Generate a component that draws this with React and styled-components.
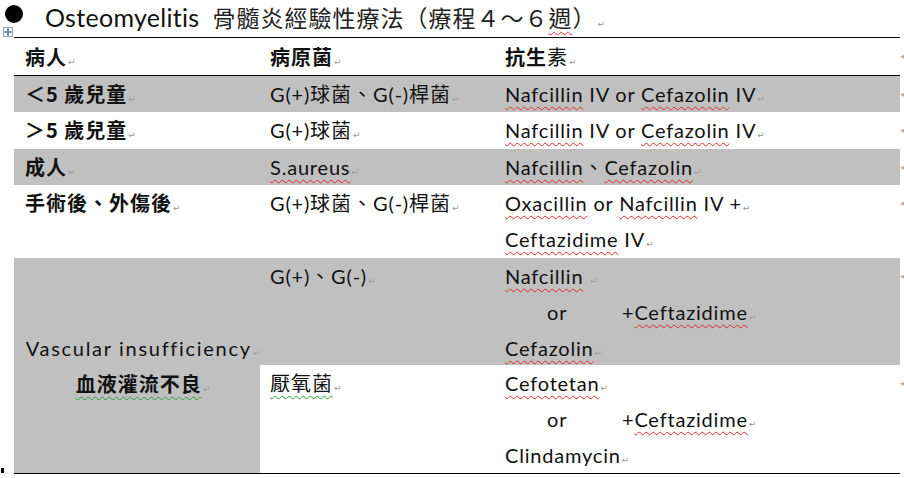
import React from "react";
import styled, { createGlobalStyle } from "styled-components";

const GlobalStyle = createGlobalStyle`
  html, body {
    margin: 0;
    padding: 0;
    background: #fff;
  }
  body {
    font-family: Lato, "Noto Sans CJK TC", sans-serif;
    color: #000;
  }
`;

const Page = styled.div`
  width: 904px;
  height: 478px;
  overflow: hidden;
`;

const TitleLine = styled.div`
  height: 37px;
  display: flex;
  align-items: flex-start;
  padding-left: 5px;
  box-sizing: border-box;
`;

const Bullet = styled.span`
  flex: none;
  width: 18px;
  height: 18px;
  margin-top: 5px;
  margin-right: 22px;
  border-radius: 50%;
  background: #000;
`;

const TitleText = styled.div`
  font-size: 25px;
  letter-spacing: 0.3px;
  line-height: 34px;
  white-space: nowrap;
  color: #111;
`;

const TitleCjk = styled.span`
  font-family: "Noto Sans CJK TC", sans-serif;
  font-size: 23px;
  letter-spacing: 1px;
  margin-left: 13px;
  color: #222;
`;

const Body = styled.div`
  display: flex;
  padding-left: 14px;
  position: relative;
`;

const MoveHandle = styled.div`
  position: absolute;
  left: 3px;
  top: -10px;
  width: 10px;
  height: 10px;
  display: flex;
`;

const CornerDot = styled.span`
  position: absolute;
  left: 1px;
  bottom: 1px;
  width: 3px;
  height: 5px;
  background: #000;
`;

const Table = styled.div`
  display: grid;
  grid-template-columns: 246px 234px 406px;
  grid-template-rows: 38px 36px 37px 36px 73px 107px 108px;
  border-top: 1px solid #000;
  border-bottom: 1px solid #000;
`;

const Cell = styled.div`
  box-sizing: border-box;
  background: ${(p) => (p.$shade ? "#c0c0c0" : "#fff")};
  padding: 0 10px 0 ${(p) => p.$pad || 10}px;
  font-size: 20px;
  letter-spacing: 0.8px;
  line-height: ${(p) => (p.$head ? "37px" : "36px")};
  white-space: nowrap;
  color: #111;
  border-bottom: ${(p) => (p.$head ? "1px solid #000" : "none")};
`;

const MergedCell = styled(Cell)`
  grid-row: span 2;
  display: flex;
  flex-direction: column;
  justify-content: center;
  align-items: center;
  padding: 0 0 0 12px;
`;

const WideLatin = styled.span`
  letter-spacing: 1.7px;
`;

const Zh = styled.span`
  font-family: "Noto Sans CJK TC", sans-serif;
  font-size: 20px;
  letter-spacing: 1px;
  font-weight: ${(p) => (p.$bold ? 700 : 400)};
`;

const Sq = styled.span`
  text-decoration: underline wavy ${(p) => (p.$green ? "#2ca02c" : "#e02828")};
  text-decoration-thickness: 1px;
  text-underline-offset: 4px;
  text-decoration-skip-ink: none;
`;

const Pm = styled.span`
  font-family: "DejaVu Sans", sans-serif;
  font-size: 9px;
  letter-spacing: 0;
  color: #9a9a9a;
  margin-left: 1px;
`;

const Line = styled.div`
  height: 36px;
  line-height: 36px;
`;

const OrLine = styled(Line)`
  display: flex;
`;

const OrWord = styled.span`
  display: inline-block;
  width: 75px;
  margin-left: 42px;
`;

const EndMarks = styled.div`
  width: 4px;
  overflow: hidden;
  padding-top: 1px;
  display: flex;
  flex-direction: column;
`;

const EndMark = styled.div`
  height: ${(p) => p.$h}px;
  line-height: ${(p) => (p.$h === 38 ? 37 : 36)}px;
  font-family: "DejaVu Sans", sans-serif;
  font-size: 9px;
  color: #b0b0b0;
  flex: none;
`;

const rowHeights = [38, 36, 37, 36, 73, 107, 108];

const MoveIcon = () => (
  <svg width="10" height="10" viewBox="0 0 10 10">
    <rect x="0.5" y="0.5" width="9" height="9" fill="#fff" stroke="#8fa3bf" />
    <path d="M5 1.5v7M1.5 5h7" stroke="#2f4f80" strokeWidth="1" />
    <path d="M5 1.5l-1.2 1.3h2.4zM5 8.5l-1.2-1.3h2.4zM1.5 5l1.3-1.2v2.4zM8.5 5l-1.3-1.2v2.4z" fill="#2f4f80" />
  </svg>
);

const Mark = () => <Pm>↵</Pm>;

export default function App() {
  return (
    <Page>
      <GlobalStyle />
      <TitleLine>
        <Bullet />
        <TitleText>
          Osteomyelitis
          <TitleCjk>
            骨髓炎經驗性療法（療程４～６<Sq>週</Sq>）<Pm>↵</Pm>
          </TitleCjk>
        </TitleText>
      </TitleLine>

      <Body>
        <MoveHandle>
          <MoveIcon />
        </MoveHandle>
        <CornerDot />
        <Table>
          <Cell $head $pad={11}>
            <Zh $bold>病人</Zh>
            <Mark />
          </Cell>
          <Cell $head>
            <Zh $bold>病原菌</Zh>
            <Mark />
          </Cell>
          <Cell $head $pad={11}>
            <Zh $bold>抗生</Zh>
            <Zh>素</Zh>
            <Mark />
          </Cell>

          <Cell $shade $pad={11}>
            <Zh $bold>＜5 歲兒童</Zh>
            <Mark />
          </Cell>
          <Cell $shade>
            G(+)<Zh>球菌、</Zh>G(-)<Zh>桿菌</Zh>
            <Mark />
          </Cell>
          <Cell $shade $pad={11}>
            <Sq>Nafcillin</Sq> IV or <Sq>Cefazolin</Sq> IV
            <Mark />
          </Cell>

          <Cell $pad={11}>
            <Zh $bold>＞5 歲兒童</Zh>
            <Mark />
          </Cell>
          <Cell>
            G(+)<Zh>球菌</Zh>
            <Mark />
          </Cell>
          <Cell $pad={11}>
            <Sq>Nafcillin</Sq> IV or <Sq>Cefazolin</Sq> IV
            <Mark />
          </Cell>

          <Cell $shade $pad={11}>
            <Zh $bold>成人</Zh>
            <Mark />
          </Cell>
          <Cell $shade>
            <Sq>S.aureus</Sq>
            <Mark />
          </Cell>
          <Cell $shade $pad={11}>
            <Sq>Nafcillin</Sq>
            <Zh>、</Zh>
            <Sq>Cefazolin</Sq>
            <Mark />
          </Cell>

          <Cell $pad={11}>
            <Zh $bold>手術後、外傷後</Zh>
            <Mark />
          </Cell>
          <Cell>
            G(+)<Zh>球菌、</Zh>G(-)<Zh>桿菌</Zh>
            <Mark />
          </Cell>
          <Cell $pad={11}>
            <Line>
              <Sq>Oxacillin</Sq> or <Sq>Nafcillin</Sq> IV +<Mark />
            </Line>
            <Line>
              <Sq>Ceftazidime</Sq> IV<Mark />
            </Line>
          </Cell>

          <MergedCell $shade>
            <Line>
              <WideLatin>Vascular insufficiency</WideLatin>
              <Mark />
            </Line>
            <Line>
              <Zh $bold>
                <Sq $green>血液灌流不良</Sq>
              </Zh>
              <Mark />
            </Line>
          </MergedCell>
          <Cell $shade>
            G(+)<Zh>、</Zh>G(-)
            <Mark />
          </Cell>
          <Cell $shade $pad={11}>
            <Line>
              <Sq>Nafcillin</Sq> <Mark />
            </Line>
            <OrLine>
              <OrWord>or</OrWord>
              <span>
                +<Sq>Ceftazidime</Sq>
                <Mark />
              </span>
            </OrLine>
            <Line>
              <Sq>Cefazolin</Sq>
              <Mark />
            </Line>
          </Cell>

          <Cell>
            <Zh>
              <Sq $green>厭氧菌</Sq>
            </Zh>
            <Mark />
          </Cell>
          <Cell $pad={11}>
            <Line>
              <Sq>Cefotetan</Sq>
              <Mark />
            </Line>
            <OrLine>
              <OrWord>or</OrWord>
              <span>
                +<Sq>Ceftazidime</Sq>
                <Mark />
              </span>
            </OrLine>
            <Line>
              Clindamycin
              <Mark />
            </Line>
          </Cell>
        </Table>
        <EndMarks>
          {rowHeights.map((h, i) => (
            <EndMark key={i} $h={h}>
              ◂
            </EndMark>
          ))}
        </EndMarks>
      </Body>
    </Page>
  );
}
